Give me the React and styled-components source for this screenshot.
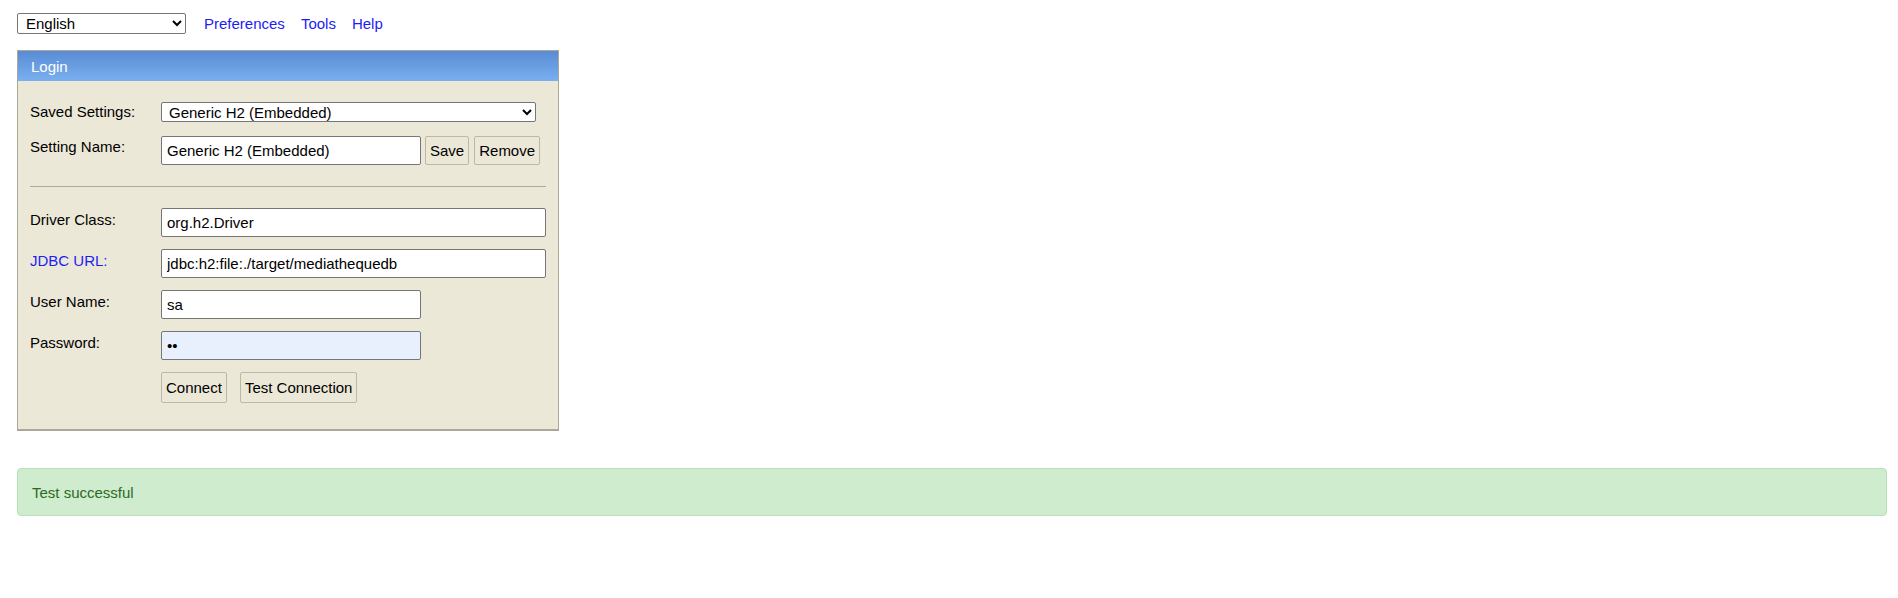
import styled, { createGlobalStyle } from "styled-components";

const GlobalStyle = createGlobalStyle`
  body {
    margin: 0;
    background: #fff;
    font-family: "Liberation Sans", Arial, sans-serif;
    font-size: 15px;
    color: #000;
  }
`;

export const Page = styled.div`
  padding: 13px 11px 0 17px;
`;

export const TopBar = styled.div`
  display: flex;
  align-items: center;
  height: 21px;
`;

export const LangSelect = styled.select`
  width: 169px;
  height: 21px;
  margin-right: 2px;
  padding: 0 0 0 4px;
  font: inherit;
  color: #000;
  background: #fff;
  border: 1px solid #767676;
  border-radius: 2px;
`;

export const NavLink = styled.a`
  color: #1c1cf5;
  text-decoration: none;
  margin-left: 16px;
  cursor: pointer;
`;

export const Panel = styled.div`
  box-sizing: border-box;
  width: 542px;
  margin-top: 16px;
  background: #ece8d8;
  border: 1px solid #aca899;
  border-bottom-width: 2px;
`;

export const PanelHeader = styled.div`
  height: 30px;
  display: flex;
  align-items: center;
  padding-left: 13px;
  color: #fff;
  background: linear-gradient(to bottom, #5a8bd3, #79b0f1);
`;

export const PanelBody = styled.div`
  display: flex;
  flex-direction: column;
  padding: 21px 12px 26px 12px;
`;

export const Row = styled.div`
  display: grid;
  grid-template-columns: 131px auto;
  align-items: start;
  margin-top: ${(p) => p.$top || 0}px;
`;

export const Label = styled.div`
  line-height: 17px;
  padding-top: ${(p) => (p.$pad === undefined ? 3 : p.$pad)}px;
  color: ${(p) => (p.$link ? "#1c1cf5" : "#000")};
`;

export const Field = styled.div`
  display: flex;
  align-items: center;
`;

export const Select = styled.select`
  box-sizing: border-box;
  width: 375px;
  height: 20px;
  padding: 0 0 0 3px;
  font: inherit;
  color: #000;
  background: #fff;
  border: 1px solid #767676;
  border-radius: 2px;
`;

export const Input = styled.input`
  box-sizing: border-box;
  width: ${(p) => p.$w}px;
  height: 29px;
  padding: 0 5px;
  font: inherit;
  color: #000;
  background: ${(p) => (p.$filled ? "#e8f0fe" : "#fff")};
  border: 1px solid #767676;
  border-radius: 2px;
  outline: none;
`;

export const Button = styled.button`
  box-sizing: border-box;
  height: ${(p) => p.$h || 29}px;
  margin-left: ${(p) => p.$ml || 0}px;
  padding: 0 4px;
  font: inherit;
  color: #000;
  background: #ece8d8;
  border: 1px solid #bcb8a8;
  border-radius: 2px;
  cursor: pointer;
`;

export const Divider = styled.div`
  height: 1px;
  margin-top: 21px;
  background: #aeab9d;
`;

export const Alert = styled.div`
  box-sizing: border-box;
  height: 48px;
  margin-top: 37px;
  display: flex;
  align-items: center;
  padding-left: 14px;
  color: #2c6a24;
  background: #cfecce;
  border: 1px solid #b8e0ba;
  border-radius: 4px;
`;

function App() {
  return (
    <Page>
      <GlobalStyle />
      <TopBar>
        <LangSelect defaultValue="en">
          <option value="en">English</option>
        </LangSelect>
        <NavLink>Preferences</NavLink>
        <NavLink>Tools</NavLink>
        <NavLink>Help</NavLink>
      </TopBar>

      <Panel>
        <PanelHeader>Login</PanelHeader>
        <PanelBody>
          <Row>
            <Label $pad={1}>Saved Settings:</Label>
            <Select defaultValue="h2">
              <option value="h2">Generic H2 (Embedded)</option>
            </Select>
          </Row>
          <Row $top={14}>
            <Label $pad={2}>Setting Name:</Label>
            <Field>
              <Input $w={260} defaultValue="Generic H2 (Embedded)" />
              <Button $ml={4}>Save</Button>
              <Button $ml={5}>Remove</Button>
            </Field>
          </Row>

          <Divider />

          <Row $top={21}>
            <Label>Driver Class:</Label>
            <Input $w={385} defaultValue="org.h2.Driver" />
          </Row>
          <Row $top={12}>
            <Label $link>JDBC URL:</Label>
            <Input $w={385} defaultValue="jdbc:h2:file:./target/mediathequedb" />
          </Row>
          <Row $top={12}>
            <Label>User Name:</Label>
            <Input $w={260} defaultValue="sa" />
          </Row>
          <Row $top={12}>
            <Label>Password:</Label>
            <Input $w={260} $filled type="password" defaultValue="sa" />
          </Row>
          <Row $top={12}>
            <span />
            <Field>
              <Button $h={31}>Connect</Button>
              <Button $h={31} $ml={13}>Test Connection</Button>
            </Field>
          </Row>
        </PanelBody>
      </Panel>

      <Alert>Test successful</Alert>
    </Page>
  );
}

export default App;
